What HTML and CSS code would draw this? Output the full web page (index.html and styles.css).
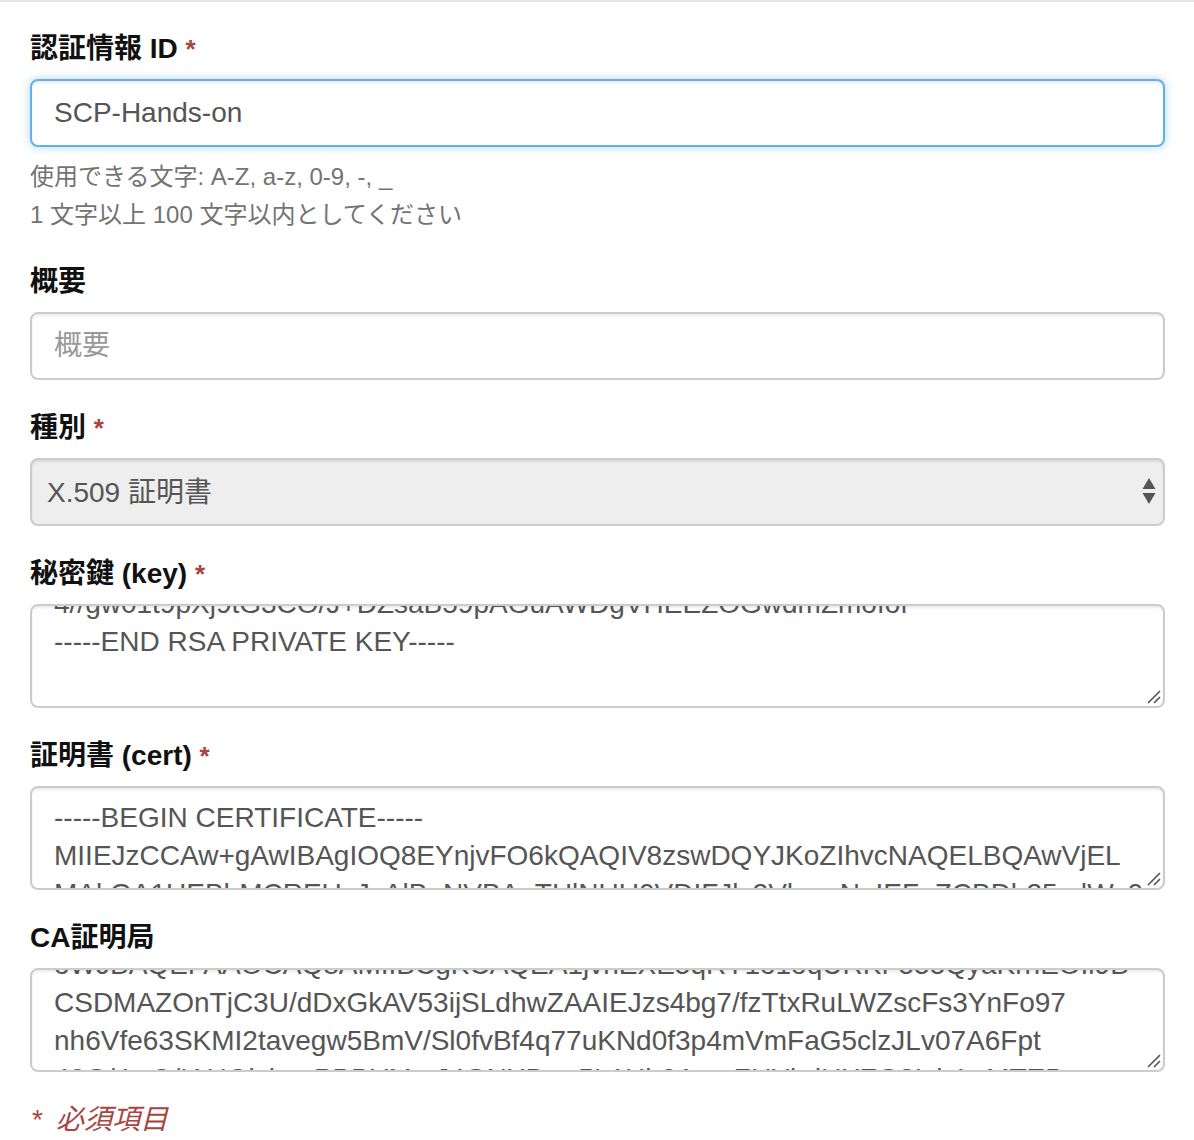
FILE: index.html
```html
<!DOCTYPE html>
<html lang="ja">
<head>
<meta charset="utf-8">
<title>認証情報</title>
<link rel="stylesheet" href="styles.css">
</head>
<body>
<form class="form">
  <div class="group">
    <label class="label" for="cid">認証情報 ID <span class="req">*</span></label>
    <input class="control control-focus" id="cid" type="text" value="SCP-Hands-on">
    <div class="help help-first">使用できる文字: A-Z, a-z, 0-9, -, _</div>
    <div class="help">1 文字以上 100 文字以内としてください</div>
  </div>
  <div class="group">
    <label class="label" for="desc">概要</label>
    <input class="control" id="desc" type="text" placeholder="概要">
  </div>
  <div class="group">
    <label class="label" for="kind">種別 <span class="req">*</span></label>
    <div class="field-wrap">
      <select class="control select" id="kind" disabled>
        <option>X.509 証明書</option>
      </select>
      <svg class="select-arrow" width="14" height="26" viewBox="0 0 14 26"><path d="M7 0 L13.5 11 L0.5 11 Z M0.5 15 L13.5 15 L7 26 Z" fill="#555"/></svg>
    </div>
  </div>
  <div class="group">
    <label class="label" for="key">秘密鍵 (key) <span class="req">*</span></label>
    <div class="field-wrap">
      <textarea class="control area" id="key" data-scroll="184">-----BEGIN RSA PRIVATE KEY-----
MIIEowIBAAKCAQEAzB7nQvY3kF1pL8xJc2mWq0tR5sHfN4uGd9eYzKb6aTiVXo3P
Wn8Kd2LqPz5mTgH1cRfYb7vUoJ0aSx4eNiM6lDkQ9wFpGhZtE3rCyB2uXsOaV7nI
hT5QjLr0eWb3yKzP8mDfA6vNcGs1oUiR4xHtY9lEkB2pZqMnJ7wCdX0aVgS5rFiO
4//gw01t9pXj9tG3CO/J+DZsaB59pAGuAWDgVHEEZOGwdmZmofof
-----END RSA PRIVATE KEY-----
</textarea>
      <svg class="grip" width="14" height="14" viewBox="0 0 14 14"><path d="M1 13 L13 1 M7 13 L13 7" stroke="#555" stroke-width="1.6" fill="none"/></svg>
    </div>
  </div>
  <div class="group">
    <label class="label" for="cert">証明書 (cert) <span class="req">*</span></label>
    <div class="field-wrap">
      <textarea class="control area" id="cert" data-scroll="0">-----BEGIN CERTIFICATE-----
MIIEJzCCAw+gAwIBAgIOQ8EYnjvFO6kQAQIV8zswDQYJKoZIhvcNAQELBQAwVjEL
MAkGA1UEBhMCREUxJzAlBgNVBAoTHlNUU0VDIFJlc2VhcmNoIEFuZCBDb25zdWx0
aW5nIEdtYkgxHjAcBgNVBAMTFVNUU0VDIFRlc3QgQ0EgMjAxOCBHMTAeFw0xOTA0
-----END CERTIFICATE-----
</textarea>
      <svg class="grip" width="14" height="14" viewBox="0 0 14 14"><path d="M1 13 L13 1 M7 13 L13 7" stroke="#555" stroke-width="1.6" fill="none"/></svg>
    </div>
  </div>
  <div class="group">
    <label class="label" for="ca">CA証明局</label>
    <div class="field-wrap">
      <textarea class="control area" id="ca" data-scroll="111">-----BEGIN CERTIFICATE-----
MIIDdzCCAl+gAwIBAgIEAgAAuTANBgkqhkiG9w0BAQUFADBaMQswCQYDVQQGEwJJ
oWJBAQEFAAOCAQ8AMIIBCgKCAQEA1jvhEXE5qRY1o1oqURKF555QyaKrhEOIl9B
CSDMAZOnTjC3U/dDxGkAV53ijSLdhwZAAIEJzs4bg7/fzTtxRuLWZscFs3YnFo97
nh6Vfe63SKMI2tavegw5BmV/Sl0fvBf4q77uKNd0f3p4mVmFaG5clzJLv07A6Fpt
40G/4wQ/IAHOlsbpzPBBYMmJ4GNXBzw5L1Hh0ArzaZUYbdUXZG3Ixk4wMTEB
-----END CERTIFICATE-----
</textarea>
      <svg class="grip" width="14" height="14" viewBox="0 0 14 14"><path d="M1 13 L13 1 M7 13 L13 7" stroke="#555" stroke-width="1.6" fill="none"/></svg>
    </div>
  </div>
  <div class="required-note"><span class="req-mark">*</span>必須項目</div>
</form>
<script src="script.js"></script>
</body>
</html>
```
FILE: styles.css
```css
html, body {
  margin: 0;
  padding: 0;
  background: #fff;
}
body {
  font-family: "Liberation Sans", "Noto Sans CJK JP", sans-serif;
  color: #333;
  border-top: 2px solid #e6e6e6;
}
.form {
  display: flex;
  flex-direction: column;
  gap: 28px;
  padding: 27px 29px 0 30px;
}
.group {
  display: flex;
  flex-direction: column;
}
.label {
  font-size: 28px;
  font-weight: bold;
  line-height: 40px;
  height: 40px;
  margin-bottom: 10px;
  color: #111;
}
.req {
  color: #a94442;
  font-size: 26px;
}
.control {
  box-sizing: border-box;
  width: 100%;
  height: 68px;
  margin: 0;
  padding: 0 22px;
  font-family: "Liberation Sans", "Noto Sans CJK JP", sans-serif;
  font-size: 28px;
  color: #555;
  background: #fff;
  border: 2px solid #ccc;
  border-radius: 8px;
  box-shadow: inset 0 2px 2px rgba(0, 0, 0, 0.075);
  outline: none;
}
.control::placeholder {
  color: #999;
}
.control-focus {
  border-color: #66afe9;
  box-shadow: inset 0 2px 2px rgba(0, 0, 0, 0.075), 0 0 10px rgba(102, 175, 233, 0.5);
}
.help {
  font-size: 24px;
  line-height: 38px;
  color: #737373;
}
.help-first {
  margin-top: 11px;
}
.field-wrap {
  position: relative;
}
.select {
  appearance: none;
  -webkit-appearance: none;
  background: #eeeeee;
  padding-left: 15px;
  opacity: 1;
  color: #555;
}
.select-arrow {
  position: absolute;
  right: 9px;
  top: 20px;
}
.area {
  height: 104px;
  padding: 11px 22px;
  line-height: 38px;
  resize: none;
  overflow: hidden;
  white-space: pre;
  display: block;
}
.grip {
  position: absolute;
  right: 4px;
  bottom: 4px;
  pointer-events: none;
}
.required-note {
  font-size: 28px;
  line-height: 40px;
  font-style: italic;
  color: #a94442;
}
.req-mark {
  display: inline-block;
  margin-left: 2px;
  margin-right: 13px;
  font-style: normal;
}
```
FILE: script.js
```js
document.querySelectorAll('textarea[data-scroll]').forEach(function (ta) {
  ta.scrollTop = parseInt(ta.getAttribute('data-scroll'), 10);
});
```
